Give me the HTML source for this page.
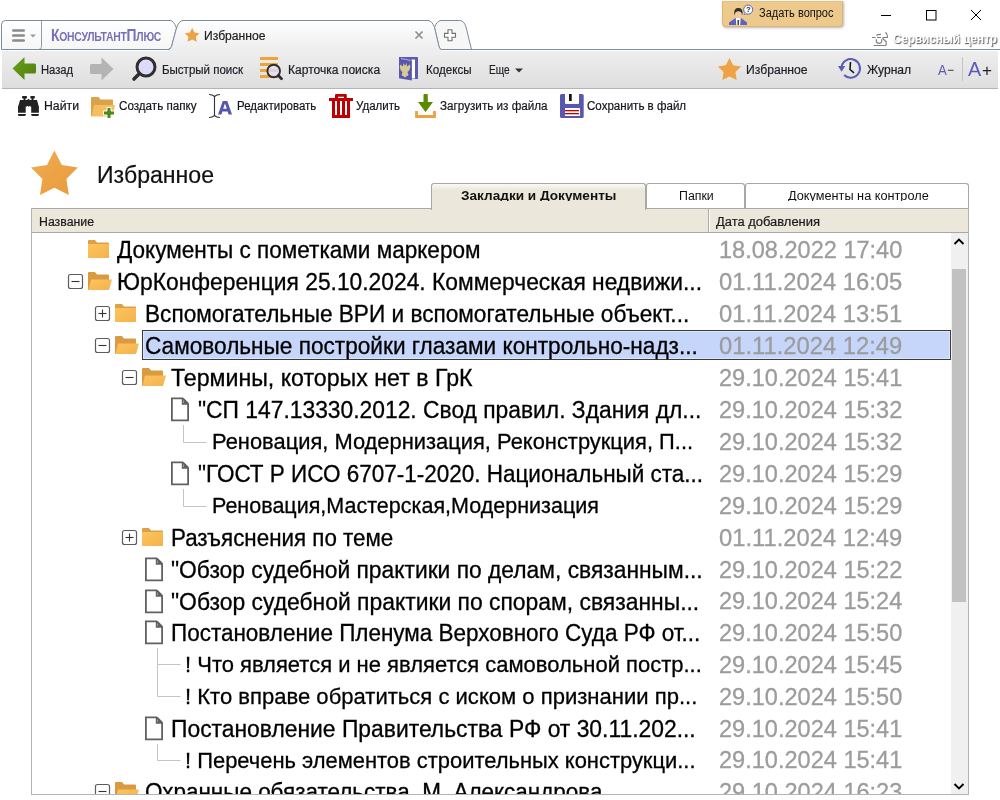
<!DOCTYPE html><html><head><meta charset="utf-8"><style>
html,body{margin:0;padding:0;width:1000px;height:800px;overflow:hidden;background:#fff;position:relative;font-family:"Liberation Sans",sans-serif}
.t,.u{position:absolute;white-space:nowrap;line-height:normal}
.a{position:absolute}
svg{position:absolute;overflow:visible}
</style></head><body>
<svg width="1000" height="52" style="left:0;top:0">
<defs>
<linearGradient id="gAct" x1="0" y1="0" x2="0" y2="1"><stop offset="0" stop-color="#ffffff"/><stop offset="1" stop-color="#ececec"/></linearGradient>
<linearGradient id="gT1" x1="0" y1="0" x2="0" y2="1"><stop offset="0" stop-color="#ffffff"/><stop offset="1" stop-color="#f6f6f6"/></linearGradient>
</defs>
<!-- tab1 -->
<path d="M1.5,49.5 L1.5,24.5 Q1.5,20.5 5.5,20.5 L170.5,20.5 Q173.5,20.5 176.5,28 L171.5,46.5 Q170.5,49.5 168,49.5 Z" fill="url(#gT1)" stroke="#7b8c9c" stroke-width="1"/>
<path d="M41.5,20.5 L41.5,46.5 Q41.5,49.5 38.5,49.5" fill="none" stroke="#7b8c9c" stroke-opacity="0.85" stroke-width="1"/>
<!-- new tab -->
<path d="M441.5,49.5 Q439.8,49.5 439,46.5 L434.5,27.5 Q437,20.5 441,20.5 L459.5,20.5 Q464,20.5 466,27 L471.5,49.5 Z" fill="#f7f7f7" stroke="#7b8c9c" stroke-width="1"/>
<!-- active tab -->
<path d="M168,52 L168,49.5 Q170.5,49.5 171.5,46.5 L176.5,28 Q179,20.5 183,20.5 L428,20.5 Q432,20.5 434.5,27.5 L439,46.5 Q439.8,49.5 441.5,49.5 L441.5,52 Z" fill="url(#gAct)" stroke="none"/>
<path d="M168,49.5 Q170.5,49.5 171.5,46.5 L176.5,28 Q179,20.5 183,20.5 L428,20.5 Q432,20.5 434.5,27.5 L439,46.5 Q439.8,49.5 441.5,49.5 L1000,49.5" fill="none" stroke="#7b8c9c" stroke-width="1"/>
<!-- hamburger -->
<rect x="12" y="29.2" width="13" height="2.6" rx="1.2" fill="#8a8a8a"/>
<rect x="12" y="34.2" width="13" height="2.6" rx="1.2" fill="#8a8a8a"/>
<rect x="12" y="39.2" width="13" height="2.6" rx="1.2" fill="#8a8a8a"/>
<path d="M30,34.5 L36,34.5 L33,37.5 Z" fill="#9a9a9a"/>
<!-- small star -->
<path d="M192.15,27.90 L194.44,32.44 L199.47,33.22 L195.86,36.81 L196.68,41.83 L192.15,39.50 L187.62,41.83 L188.44,36.81 L184.83,33.22 L189.86,32.44 Z" fill="#eea244"/>
<!-- close x -->
<path d="M415.5,31.5 L422.5,38.5 M422.5,31.5 L415.5,38.5" stroke="#8c8c8c" stroke-width="1.6"/>
<!-- plus outline -->
<path d="M448,29.8 L452,29.8 L452,33.4 L455.5,33.4 L455.5,37.2 L452,37.2 L452,40.8 L448,40.8 L448,37.2 L444.5,37.2 L444.5,33.4 L448,33.4 Z" fill="#fff" stroke="#707070" stroke-width="1.1"/>
<!-- window controls -->
<line x1="881" y1="15.5" x2="891" y2="15.5" stroke="#000" stroke-width="1"/>
<rect x="926.5" y="10.5" width="9.5" height="9.5" fill="none" stroke="#000" stroke-width="1"/>
<path d="M971,10 L981,20 M981,10 L971,20" stroke="#000" stroke-width="1"/>
</svg>
<div class="a" style="left:722px;top:1px;width:121px;height:26px;box-sizing:border-box;background:#edc98b;border:1px solid #e2b468;border-top-color:#e8c07c;border-radius:0 0 4px 4px;box-shadow:1px 1px 2.5px rgba(40,50,90,0.35)"></div>
<svg width="24" height="24" style="left:728px;top:3px">
<path d="M1,22 L1,19.5 L7.5,15 L13,15 L19,19.5 L19,22 Z" fill="#5d63c0"/>
<path d="M7.8,15 L12.7,15 L12.2,22 L8.3,22 Z" fill="#fff"/>
<path d="M9.4,17 L11.1,17 L11,22 L9.5,22 Z" fill="#444"/>
<ellipse cx="10.4" cy="10.8" rx="3.1" ry="3.9" fill="#f1c99b"/>
<path d="M6.2,10.8 Q5.8,5 10.4,5 Q15,5 14.6,10.8 L14,12.2 Q14,8.2 10.4,8.2 Q6.8,8.2 6.8,12.2 Z" fill="#2e2e2e"/>
<circle cx="20.2" cy="6.6" r="4.5" fill="#fff" stroke="#5a62c0" stroke-width="1"/>
<path d="M17.2,9.6 L16,11.6 L18.8,10.8" fill="#fff" stroke="#5a62c0" stroke-width="0.7"/>
<text x="20.2" y="9.3" font-size="7.5" font-weight="bold" text-anchor="middle" fill="#222" font-family="Liberation Sans">?</text>
</svg>
<svg width="30" height="22" style="left:866px;top:28px">
<defs><filter id="blr" x="-20%" y="-20%" width="140%" height="140%"><feGaussianBlur stdDeviation="0.35"/></filter></defs>
<g transform="translate(-866,-28)" fill="none" stroke="#555" stroke-width="1.2" filter="url(#blr)" stroke-opacity="0.75">
<path d="M872,37.5 L875.5,37.5 M877,37.5 L881,37.5 M882.5,37.5 L887.5,37.5 Q888,34.5 885.5,32.2"/>
<path d="M876.5,35.5 Q877.5,34.3 881,34.4"/>
<path d="M876.3,39.2 L876.3,41.5 Q876.8,43.4 879,43.4 Q881.3,43.4 881.7,41.3 L881.7,39.2"/>
<path d="M882.5,38.2 L886.2,41.8 L886.2,44.5 Q886.2,45.5 885,45.5 L873.5,45.5"/>
</g></svg>
<div class="a" style="left:2px;top:51px;width:996px;height:37px;background:linear-gradient(#eeeeee,#dedede);border-bottom:1px solid #b4b4b4"></div>
<svg width="1000" height="40" style="left:0;top:50px">
<defs><linearGradient id="gGreen" x1="0" y1="0" x2="1" y2="1"><stop offset="0" stop-color="#6aa01c"/><stop offset="1" stop-color="#4f7f0c"/></linearGradient></defs>
<g transform="translate(0,-50)">
<path d="M12.5,68.5 L24.5,57 L24.5,63.5 L34.5,63.5 Q36,63.5 36,65 L36,72 Q36,73.5 34.5,73.5 L24.5,73.5 L24.5,80 Z" fill="url(#gGreen)"/>
<path d="M113.5,69 L101.5,57.5 L101.5,64 L91.5,64 Q90,64 90,65.5 L90,72.5 Q90,74 91.5,74 L101.5,74 L101.5,80.5 Z" fill="#b4b4b4"/>
<circle cx="146" cy="67" r="9" fill="#dcdcfa" stroke="#2f2f2f" stroke-width="3"/>
<line x1="139" y1="74" x2="134" y2="79" stroke="#2f2f2f" stroke-width="3.6" stroke-linecap="round"/>
<rect x="260" y="57" width="18" height="3" fill="#eea33c"/>
<rect x="260" y="63" width="18" height="3" fill="#eea33c"/>
<rect x="260" y="69" width="18" height="3" fill="#eea33c"/>
<rect x="260" y="75" width="18" height="3" fill="#eea33c"/>
<circle cx="273.7" cy="71" r="6.3" fill="#e2deff" fill-opacity="0.75" stroke="#2e2e2e" stroke-width="1.9"/>
<line x1="278.3" y1="75.6" x2="281.5" y2="78.8" stroke="#2e2e2e" stroke-width="2.8" stroke-linecap="round"/>
<path d="M399,57 L417,57 Q418,57 418,58 L418,79 L413,79 L399,78 Z" fill="#5b5bb5"/>
<path d="M411.5,59.5 L415,59.5 L415,78.5 L411.5,78.5 Z" fill="#fff"/>
<path d="M399,57.5 L411.8,60.8 L411.8,80.6 L399,78.2 Z" fill="#5757b0"/>
<path d="M401,58.6 Q406,59.2 410.5,60.6" fill="none" stroke="#c8c8f0" stroke-width="0.8"/>
<g fill="#d6cb92">
<path d="M403.8,63 L404.6,65.5 L405.4,65.5 L406.2,63 L406.8,64.5 L407.2,66.5 L409.8,64.5 L410.3,67 L409.2,70.5 L407.5,72 L408.5,75 L405,77.5 L401.5,75 L402.5,72 L400.8,70.5 L399.7,67 L400.2,64.5 L402.8,66.5 L403.2,64.5 Z"/>
</g>
<path d="M489,60 L519,60" stroke="none"/>
<path d="M515,68.5 L523,68.5 L519,72.5 Z" fill="#333"/>
<path d="M729.50,58.00 L733.14,65.18 L741.10,66.43 L735.40,72.12 L736.67,80.07 L729.50,76.40 L722.33,80.07 L723.60,72.12 L717.90,66.43 L725.86,65.18 Z" fill="#eea244"/>
<path d="M844.1,75 A9.3,9.3 0 1 0 841.5,66.8" fill="none" stroke="#5a5ab8" stroke-width="2"/>
<path d="M838,66 L845.2,66 L841.6,71.8 Z" fill="#5a5ab8"/>
<path d="M850.5,62 L850,69.5 L854,72.8" fill="none" stroke="#111" stroke-width="1.5"/>
<line x1="962.5" y1="57" x2="962.5" y2="81" stroke="#c4c4c4" stroke-width="1"/>
</g></svg>
<svg width="1000" height="40" style="left:0;top:88px"><g transform="translate(0,-88)">
<!-- binoculars -->
<g fill="#222">
<rect x="22" y="96" width="5" height="2.6" rx="0.8"/><rect x="30.3" y="96" width="4.6" height="2.6" rx="0.8"/>
<rect x="23.5" y="98" width="2" height="2.5"/><rect x="31.5" y="98" width="2" height="2.5"/>
<path d="M20,100 L27,100 L28.5,98.8 L30,100 L37,100 L38.5,105.5 L38.9,106.5 L38.9,112.7 L31.2,112.7 L31.2,106.5 L30,106.5 L29.2,105.8 L28.5,107 L27.8,105.8 L27,106.5 L25.7,106.5 L25.7,112.7 L18,112.7 L18,106.5 L18.5,105.5 Z"/>
<path d="M18,114 L25.8,114 L25.8,115 Q25.5,116 24.5,116 L19.3,116 Q18.3,116 18,115 Z"/>
<path d="M31.2,114 L38.9,114 L38.9,115 Q38.6,116 37.6,116 L32.5,116 Q31.5,116 31.2,115 Z"/>
</g>
<!-- folder plus -->
<g transform="translate(91,97)">
<path d="M0,1 Q0,0 1,0 L7.5,0 L9.5,2.5 L21,2.5 Q22,2.5 22,3.5 L22,10 L0,19.5 Z" fill="#dca14c"/>
<path d="M3,8 L24,8 L21.5,19.5 L0.5,19.5 Z" fill="#f7bf5c"/>
</g>
<path d="M107,107.5 L111,107.5 L111,111 L114.5,111 L114.5,115 L111,115 L111,118.5 L107,118.5 L107,115 L103.5,115 L103.5,111 L107,111 Z" fill="#4a8a1a" stroke="#fff" stroke-width="1"/>
<!-- I-beam + A -->
<path d="M209,94.5 Q212.5,94.5 214.5,96.5 Q216.5,94.5 220,94.5 M214.5,96.5 L214.5,115.5 M209,117.5 Q212.5,117.5 214.5,115.5 Q216.5,117.5 220,117.5" fill="none" stroke="#333" stroke-width="1.1"/>
<path d="M218,114.5 L222.8,101 L227.3,101 L232,114.5 L228.6,114.5 L227.6,111.4 L222.4,111.4 L221.4,114.5 Z M223.2,108.7 L226.8,108.7 L225,103.2 Z" fill="#5555b0" fill-rule="evenodd"/>
<!-- trash -->
<g fill="#c00000">
<path d="M335,98.2 L335,95.3 Q335,94 336.3,94 L345.5,94 Q346.8,94 346.8,95.3 L346.8,98.2 L344,98.2 L344,96.8 L338,96.8 L338,98.2 Z"/>
<rect x="329" y="98" width="24" height="3"/>
<path d="M332,101 L350,101 L350,118 L332,118 Z M335,101 L335,115 L337,115 L337,101 Z M340,101 L340,115 L342,115 L342,101 Z M345,101 L345,115 L347,115 L347,101 Z" fill-rule="evenodd"/>
</g>
<!-- download -->
<path d="M423.5,95 Q423.5,94 424.5,94 L426.8,94 Q427.8,94 427.8,95 L427.8,102 L433,102 L425.5,112 L418,102 L423.5,102 Z" fill="#5a8a00"/>
<path d="M415.1,111 L417.9,111 L417.9,115 L433.1,115 L433.1,111 L435.9,111 L435.9,118 L415.1,118 Z" fill="#eea040"/>
<!-- floppy -->
<path d="M561.5,94 L565,94 L565,103 Q565,104 566,104 L578,104 Q579,104 579,103 L579,94 L582.2,94 Q583.7,94 583.7,95.5 L583.7,116.4 Q583.7,117.9 582.2,117.9 L561.5,117.9 Q560,117.9 560,116.4 L560,95.5 Q560,94 561.5,94 Z M565,108 L565,115.5 Q565,116 565.5,116 L579.5,116 Q580,116 580,115.5 L580,108.5 Q580,108 579.5,108 L565.5,108 Q565,108 565,108.5 Z" fill="#5858b0" fill-rule="evenodd"/>
<rect x="569" y="94" width="2.7" height="7" fill="#111"/>
<rect x="565" y="110" width="14" height="1.3" fill="#c00000"/>
<rect x="565" y="113" width="14" height="1.3" fill="#c00000"/>
</g></svg>
<svg width="50" height="50" style="left:30px;top:149px">
<defs><linearGradient id="gStar" x1="0" y1="0" x2="1" y2="1"><stop offset="0" stop-color="#f0ac50"/><stop offset="1" stop-color="#e89a3c"/></linearGradient></defs>
<path d="M24.40,1.50 L31.81,15.91 L47.80,18.50 L36.38,29.99 L38.86,46.00 L24.40,38.70 L9.94,46.00 L12.42,29.99 L1.00,18.50 L16.99,15.91 Z" fill="url(#gStar)"/>
</svg>
<div class="a" style="left:646px;top:183px;width:99px;height:25px;background:#fff;border:1px solid #a8a8a8;border-bottom:none;border-radius:3px 3px 0 0;box-sizing:border-box"></div>
<div class="a" style="left:745px;top:183px;width:224px;height:25px;background:#fff;border:1px solid #a8a8a8;border-bottom:none;border-radius:3px 3px 0 0;box-sizing:border-box"></div>
<div class="a" style="left:31px;top:208px;width:938px;height:587px;border:1px solid #b4b4b4;box-sizing:border-box;background:#fff"></div>
<div class="a" style="left:32px;top:209px;width:936px;height:23px;background:#ebe7da;border-bottom:1px solid #a8a8a8"></div>
<div class="a" style="left:646px;top:208px;width:323px;height:1px;background:#a8a8a8"></div>
<div class="a" style="left:431px;top:183px;width:215px;height:27px;background:linear-gradient(#fafaf6 0px,#ebe7da 6px);border:1px solid #a8a8a8;border-bottom:none;border-radius:3px 3px 0 0;box-sizing:border-box"></div>
<div class="a" style="left:32px;top:208px;width:399px;height:1px;background:#a8a8a8"></div>
<div class="a" style="left:708px;top:209px;width:1px;height:23px;background:#ababab"></div><div class="a" style="left:709px;top:209px;width:1px;height:23px;background:#fbfaf6"></div>
<div class="a" style="left:431px;top:183px;width:538px;height:18px;overflow:hidden"><div class="u" style="left:30px;top:6.14px;font-size:12px;font-weight:bold;color:#111;transform:scaleX(1.133);transform-origin:0 0">Закладки и Документы</div><div class="u" style="left:248px;top:6.14px;font-size:12px;color:#111;transform:scaleX(1.03);transform-origin:0 0">Папки</div><div class="u" style="left:356.5px;top:6.14px;font-size:12px;color:#111;transform:scaleX(1.06);transform-origin:0 0">Документы на контроле</div></div>
<div class="a" style="left:142px;top:330px;width:809px;height:30px;box-sizing:border-box;background:#c6d6fa;border:1px solid #3c3a36;box-shadow:inset 0 0 0 1px #dbe5fc"></div>
<svg width="1000" height="800" style="left:0;top:0"><defs><linearGradient id="gFold" x1="0" y1="0" x2="1" y2="1"><stop offset="0" stop-color="#fcc45e"/><stop offset="1" stop-color="#f4b24c"/></linearGradient></defs><g transform="translate(88,240.00)"><path d="M0,1 Q0,0 1,0 L7,0 L9,2.5 L20,2.5 Q21,2.5 21,3.5 L21,18 L1,18 Q0,18 0,17 Z" fill="#dda04a"/><path d="M0,4 L21,4 L21,18 L1,18 Q0,18 0,17 Z" fill="url(#gFold)"/></g><rect x="68.5" y="274.5" width="14" height="14" rx="2" fill="#fff" stroke="#5c5c5c" stroke-width="1.2"/><line x1="71.5" y1="281.5" x2="79.5" y2="281.5" stroke="#333" stroke-width="1.1"/><g transform="translate(88,272.00)"><path d="M0,1 Q0,0 1,0 L7,0 L9,2.5 L20,2.5 Q21,2.5 21,3.5 L21,9 L0,18 Z" fill="#d99a42"/><path d="M3,7.5 L24,7.5 L21,18 L0.5,18 Z" fill="url(#gFold)"/></g><rect x="95.5" y="306.5" width="14" height="14" rx="2" fill="#fff" stroke="#5c5c5c" stroke-width="1.2"/><line x1="98.5" y1="313.5" x2="106.5" y2="313.5" stroke="#333" stroke-width="1.1"/><line x1="102.5" y1="309.5" x2="102.5" y2="317.5" stroke="#333" stroke-width="1.1"/><g transform="translate(115,304.00)"><path d="M0,1 Q0,0 1,0 L7,0 L9,2.5 L20,2.5 Q21,2.5 21,3.5 L21,18 L1,18 Q0,18 0,17 Z" fill="#dda04a"/><path d="M0,4 L21,4 L21,18 L1,18 Q0,18 0,17 Z" fill="url(#gFold)"/></g><rect x="95.5" y="338.5" width="14" height="14" rx="2" fill="#fff" stroke="#5c5c5c" stroke-width="1.2"/><line x1="98.5" y1="345.5" x2="106.5" y2="345.5" stroke="#333" stroke-width="1.1"/><g transform="translate(115,336.00)"><path d="M0,1 Q0,0 1,0 L7,0 L9,2.5 L20,2.5 Q21,2.5 21,3.5 L21,9 L0,18 Z" fill="#d99a42"/><path d="M3,7.5 L24,7.5 L21,18 L0.5,18 Z" fill="url(#gFold)"/></g><rect x="122.5" y="370.5" width="14" height="14" rx="2" fill="#fff" stroke="#5c5c5c" stroke-width="1.2"/><line x1="125.5" y1="377.5" x2="133.5" y2="377.5" stroke="#333" stroke-width="1.1"/><g transform="translate(142,368.00)"><path d="M0,1 Q0,0 1,0 L7,0 L9,2.5 L20,2.5 Q21,2.5 21,3.5 L21,9 L0,18 Z" fill="#d99a42"/><path d="M3,7.5 L24,7.5 L21,18 L0.5,18 Z" fill="url(#gFold)"/></g><g transform="translate(171,397.50)"><path d="M0.9,0.9 L11.6,0.9 L17.1,6.4 L17.1,22.9 L0.9,22.9 Z" fill="#fff" stroke="#616161" stroke-width="1.8" stroke-linejoin="miter"/><path d="M11.6,0.9 L11.6,6.4 L17.1,6.4" fill="none" stroke="#616161" stroke-width="1.6"/><path d="M12.6,0.5 L17.6,5.5 L12.6,5.5 Z" fill="#616161"/></g><line x1="183.5" y1="442.5" x2="206.5" y2="442.5" stroke="#c4c4c4" stroke-width="1"/><g transform="translate(171,461.50)"><path d="M0.9,0.9 L11.6,0.9 L17.1,6.4 L17.1,22.9 L0.9,22.9 Z" fill="#fff" stroke="#616161" stroke-width="1.8" stroke-linejoin="miter"/><path d="M11.6,0.9 L11.6,6.4 L17.1,6.4" fill="none" stroke="#616161" stroke-width="1.6"/><path d="M12.6,0.5 L17.6,5.5 L12.6,5.5 Z" fill="#616161"/></g><line x1="183.5" y1="506.5" x2="206.5" y2="506.5" stroke="#c4c4c4" stroke-width="1"/><rect x="122.5" y="530.5" width="14" height="14" rx="2" fill="#fff" stroke="#5c5c5c" stroke-width="1.2"/><line x1="125.5" y1="537.5" x2="133.5" y2="537.5" stroke="#333" stroke-width="1.1"/><line x1="129.5" y1="533.5" x2="129.5" y2="541.5" stroke="#333" stroke-width="1.1"/><g transform="translate(142,528.00)"><path d="M0,1 Q0,0 1,0 L7,0 L9,2.5 L20,2.5 Q21,2.5 21,3.5 L21,18 L1,18 Q0,18 0,17 Z" fill="#dda04a"/><path d="M0,4 L21,4 L21,18 L1,18 Q0,18 0,17 Z" fill="url(#gFold)"/></g><g transform="translate(145,557.50)"><path d="M0.9,0.9 L11.6,0.9 L17.1,6.4 L17.1,22.9 L0.9,22.9 Z" fill="#fff" stroke="#616161" stroke-width="1.8" stroke-linejoin="miter"/><path d="M11.6,0.9 L11.6,6.4 L17.1,6.4" fill="none" stroke="#616161" stroke-width="1.6"/><path d="M12.6,0.5 L17.6,5.5 L12.6,5.5 Z" fill="#616161"/></g><g transform="translate(145,589.50)"><path d="M0.9,0.9 L11.6,0.9 L17.1,6.4 L17.1,22.9 L0.9,22.9 Z" fill="#fff" stroke="#616161" stroke-width="1.8" stroke-linejoin="miter"/><path d="M11.6,0.9 L11.6,6.4 L17.1,6.4" fill="none" stroke="#616161" stroke-width="1.6"/><path d="M12.6,0.5 L17.6,5.5 L12.6,5.5 Z" fill="#616161"/></g><g transform="translate(145,620.50)"><path d="M0.9,0.9 L11.6,0.9 L17.1,6.4 L17.1,22.9 L0.9,22.9 Z" fill="#fff" stroke="#616161" stroke-width="1.8" stroke-linejoin="miter"/><path d="M11.6,0.9 L11.6,6.4 L17.1,6.4" fill="none" stroke="#616161" stroke-width="1.6"/><path d="M12.6,0.5 L17.6,5.5 L12.6,5.5 Z" fill="#616161"/></g><line x1="157.5" y1="664.5" x2="180.5" y2="664.5" stroke="#c4c4c4" stroke-width="1"/><line x1="157.5" y1="696.5" x2="180.5" y2="696.5" stroke="#c4c4c4" stroke-width="1"/><g transform="translate(145,716.50)"><path d="M0.9,0.9 L11.6,0.9 L17.1,6.4 L17.1,22.9 L0.9,22.9 Z" fill="#fff" stroke="#616161" stroke-width="1.8" stroke-linejoin="miter"/><path d="M11.6,0.9 L11.6,6.4 L17.1,6.4" fill="none" stroke="#616161" stroke-width="1.6"/><path d="M12.6,0.5 L17.6,5.5 L12.6,5.5 Z" fill="#616161"/></g><line x1="157.5" y1="760.5" x2="180.5" y2="760.5" stroke="#c4c4c4" stroke-width="1"/><rect x="95.5" y="784.5" width="14" height="14" rx="2" fill="#fff" stroke="#5c5c5c" stroke-width="1.2"/><line x1="98.5" y1="791.5" x2="106.5" y2="791.5" stroke="#333" stroke-width="1.1"/><g transform="translate(115,782.00)"><path d="M0,1 Q0,0 1,0 L7,0 L9,2.5 L20,2.5 Q21,2.5 21,3.5 L21,9 L0,18 Z" fill="#d99a42"/><path d="M3,7.5 L24,7.5 L21,18 L0.5,18 Z" fill="url(#gFold)"/></g><line x1="183.5" y1="425" x2="183.5" y2="442.5" stroke="#c4c4c4" stroke-width="1"/><line x1="183.5" y1="489" x2="183.5" y2="506.5" stroke="#c4c4c4" stroke-width="1"/><line x1="157.5" y1="648" x2="157.5" y2="696.5" stroke="#c4c4c4" stroke-width="1"/><line x1="157.5" y1="744" x2="157.5" y2="760.5" stroke="#c4c4c4" stroke-width="1"/></svg>
<div class="t" id="t0" style="left:50.5px;top:25.60px;font-size:16.8px;color:#7870b6;font-weight:bold;transform:scaleX(0.8261);transform-origin:0 0;letter-spacing:-0.3px;">К<span style="font-size:12.6px">ОНСУЛЬТАНТ</span>П<span style="font-size:12.6px">ЛЮС</span></div>
<div class="t" id="t1" style="left:203.6px;top:28.64px;font-size:12px;color:#222;font-weight:normal;transform:scaleX(1.0110);transform-origin:0 0;-webkit-text-stroke:0.2px currentColor;">Избранное</div>
<div class="t" id="t2" style="left:759px;top:5.94px;font-size:12px;color:#111;font-weight:normal;transform:scaleX(0.9176);transform-origin:0 0;">Задать вопрос</div>
<div class="t" id="t3" style="left:893px;top:30.98px;font-size:13.5px;color:#ffffff;font-weight:bold;transform:scaleX(0.8654);transform-origin:0 0;text-shadow:1px 1px 1.2px rgba(0,0,0,0.7);">Сервисный центр</div>
<div class="t" id="t4" style="left:41.2px;top:62.64px;font-size:12px;color:#1e1e26;font-weight:normal;transform:scaleX(0.9334);transform-origin:0 0;-webkit-text-stroke:0.2px currentColor;">Назад</div>
<div class="t" id="t5" style="left:161.7px;top:62.64px;font-size:12px;color:#1e1e26;font-weight:normal;transform:scaleX(0.9601);transform-origin:0 0;-webkit-text-stroke:0.2px currentColor;">Быстрый поиск</div>
<div class="t" id="t6" style="left:288.4px;top:62.64px;font-size:12px;color:#1e1e26;font-weight:normal;transform:scaleX(1.0045);transform-origin:0 0;-webkit-text-stroke:0.2px currentColor;">Карточка поиска</div>
<div class="t" id="t7" style="left:426.2px;top:62.64px;font-size:12px;color:#1e1e26;font-weight:normal;transform:scaleX(0.9683);transform-origin:0 0;-webkit-text-stroke:0.2px currentColor;">Кодексы</div>
<div class="t" id="t8" style="left:488.7px;top:62.64px;font-size:12px;color:#1e1e26;font-weight:normal;transform:scaleX(0.8435);transform-origin:0 0;-webkit-text-stroke:0.2px currentColor;">Еще</div>
<div class="t" id="t9" style="left:746.2px;top:62.64px;font-size:12px;color:#1e1e26;font-weight:normal;transform:scaleX(1.0127);transform-origin:0 0;-webkit-text-stroke:0.2px currentColor;">Избранное</div>
<div class="t" id="t10" style="left:867.2px;top:62.64px;font-size:12px;color:#1e1e26;font-weight:normal;transform:scaleX(1.0069);transform-origin:0 0;-webkit-text-stroke:0.2px currentColor;">Журнал</div>
<div class="t" id="t11" style="left:938px;top:61.22px;font-size:15px;color:#5a5ab8;font-weight:normal;transform:scaleX(0.8786);transform-origin:0 0;">A</div>
<div class="t" id="t12" style="left:947px;top:62.94px;font-size:12px;color:#222;font-weight:normal;transform:scaleX(0.9978);transform-origin:0 0;">−</div>
<div class="t" id="t13" style="left:967.5px;top:57.25px;font-size:20.5px;color:#5a5ab8;font-weight:normal;transform:scaleX(0.9644);transform-origin:0 0;">A</div>
<div class="t" id="t14" style="left:981.5px;top:61.12px;font-size:17px;color:#222;font-weight:normal;transform:scaleX(1.0063);transform-origin:0 0;">+</div>
<div class="t" id="t15" style="left:44.2px;top:99.14px;font-size:12px;color:#15151c;font-weight:normal;transform:scaleX(1.0219);transform-origin:0 0;-webkit-text-stroke:0.2px currentColor;">Найти</div>
<div class="t" id="t16" style="left:118.9px;top:99.14px;font-size:12px;color:#15151c;font-weight:normal;transform:scaleX(0.9700);transform-origin:0 0;-webkit-text-stroke:0.2px currentColor;">Создать папку</div>
<div class="t" id="t17" style="left:236.9px;top:99.14px;font-size:12px;color:#15151c;font-weight:normal;transform:scaleX(0.9565);transform-origin:0 0;-webkit-text-stroke:0.2px currentColor;">Редактировать</div>
<div class="t" id="t18" style="left:356.2px;top:99.14px;font-size:12px;color:#15151c;font-weight:normal;transform:scaleX(0.9623);transform-origin:0 0;-webkit-text-stroke:0.2px currentColor;">Удалить</div>
<div class="t" id="t19" style="left:440px;top:99.14px;font-size:12px;color:#15151c;font-weight:normal;transform:scaleX(0.9729);transform-origin:0 0;-webkit-text-stroke:0.2px currentColor;">Загрузить из файла</div>
<div class="t" id="t20" style="left:587.2px;top:99.14px;font-size:12px;color:#15151c;font-weight:normal;transform:scaleX(0.9627);transform-origin:0 0;-webkit-text-stroke:0.2px currentColor;">Сохранить в файл</div>
<div class="t" id="t21" style="left:96.7px;top:162.19px;font-size:23px;color:#111;font-weight:normal;transform:scaleX(1.0038);transform-origin:0 0;-webkit-text-stroke:0.2px #111;">Избранное</div>
<div class="t" id="t22" style="left:38.8px;top:215.14px;font-size:12px;color:#1a1a1a;font-weight:normal;transform:scaleX(1.0256);transform-origin:0 0;-webkit-text-stroke:0.2px currentColor;">Название</div>
<div class="t" id="t23" style="left:715.5px;top:215.14px;font-size:12px;color:#1a1a1a;font-weight:normal;transform:scaleX(1.0781);transform-origin:0 0;-webkit-text-stroke:0.2px currentColor;">Дата добавления</div>
<div class="t" id="t24" style="left:117px;top:236.73px;font-size:23.5px;color:#000;font-weight:normal;transform:scaleX(0.9595);transform-origin:0 0;-webkit-text-stroke:0.3px #000;">Документы с пометками маркером</div>
<div class="t" id="t25" style="left:718.5px;top:237.19px;font-size:23px;color:#9c9c9c;font-weight:normal;transform:scaleX(1.0237);transform-origin:0 0;-webkit-text-stroke:0.3px #9c9c9c;">18.08.2022 17:40</div>
<div class="t" id="t26" style="left:117px;top:268.73px;font-size:23.5px;color:#000;font-weight:normal;transform:scaleX(0.9706);transform-origin:0 0;-webkit-text-stroke:0.3px #000;">ЮрКонференция 25.10.2024. Коммерческая недвижи...</div>
<div class="t" id="t27" style="left:718.5px;top:269.19px;font-size:23px;color:#9c9c9c;font-weight:normal;transform:scaleX(1.0335);transform-origin:0 0;-webkit-text-stroke:0.3px #9c9c9c;">01.11.2024 16:05</div>
<div class="t" id="t28" style="left:144.5px;top:300.73px;font-size:23.5px;color:#000;font-weight:normal;transform:scaleX(0.9627);transform-origin:0 0;-webkit-text-stroke:0.3px #000;">Вспомогательные ВРИ и вспомогательные объект...</div>
<div class="t" id="t29" style="left:718.5px;top:301.19px;font-size:23px;color:#9c9c9c;font-weight:normal;transform:scaleX(1.0335);transform-origin:0 0;-webkit-text-stroke:0.3px #9c9c9c;">01.11.2024 13:51</div>
<div class="t" id="t30" style="left:145px;top:332.73px;font-size:23.5px;color:#000;font-weight:normal;transform:scaleX(0.9624);transform-origin:0 0;-webkit-text-stroke:0.3px #000;">Самовольные постройки глазами контрольно-надз...</div>
<div class="t" id="t31" style="left:718.5px;top:333.19px;font-size:23px;color:#9c9c9c;font-weight:normal;transform:scaleX(1.0335);transform-origin:0 0;-webkit-text-stroke:0.3px #9c9c9c;">01.11.2024 12:49</div>
<div class="t" id="t32" style="left:171px;top:364.73px;font-size:23.5px;color:#000;font-weight:normal;transform:scaleX(0.9852);transform-origin:0 0;-webkit-text-stroke:0.3px #000;">Термины, которых нет в ГрК</div>
<div class="t" id="t33" style="left:718.5px;top:365.19px;font-size:23px;color:#9c9c9c;font-weight:normal;transform:scaleX(1.0237);transform-origin:0 0;-webkit-text-stroke:0.3px #9c9c9c;">29.10.2024 15:41</div>
<div class="t" id="t34" style="left:197.6px;top:396.73px;font-size:23.5px;color:#000;font-weight:normal;transform:scaleX(0.9713);transform-origin:0 0;-webkit-text-stroke:0.3px #000;">"СП 147.13330.2012. Свод правил. Здания дл...</div>
<div class="t" id="t35" style="left:718.5px;top:397.19px;font-size:23px;color:#9c9c9c;font-weight:normal;transform:scaleX(1.0237);transform-origin:0 0;-webkit-text-stroke:0.3px #9c9c9c;">29.10.2024 15:32</div>
<div class="t" id="t36" style="left:211.9px;top:428.37px;font-size:22.8px;color:#000;font-weight:normal;transform:scaleX(0.9602);transform-origin:0 0;-webkit-text-stroke:0.3px #000;">Реновация, Модернизация, Реконструкция, П...</div>
<div class="t" id="t37" style="left:718.5px;top:429.19px;font-size:23px;color:#9c9c9c;font-weight:normal;transform:scaleX(1.0237);transform-origin:0 0;-webkit-text-stroke:0.3px #9c9c9c;">29.10.2024 15:32</div>
<div class="t" id="t38" style="left:197.6px;top:460.73px;font-size:23.5px;color:#000;font-weight:normal;transform:scaleX(0.9567);transform-origin:0 0;-webkit-text-stroke:0.3px #000;">"ГОСТ Р ИСО 6707-1-2020. Национальный ста...</div>
<div class="t" id="t39" style="left:718.5px;top:461.19px;font-size:23px;color:#9c9c9c;font-weight:normal;transform:scaleX(1.0237);transform-origin:0 0;-webkit-text-stroke:0.3px #9c9c9c;">29.10.2024 15:29</div>
<div class="t" id="t40" style="left:211.9px;top:492.37px;font-size:22.8px;color:#000;font-weight:normal;transform:scaleX(0.9438);transform-origin:0 0;-webkit-text-stroke:0.3px #000;">Реновация,Мастерская,Модернизация</div>
<div class="t" id="t41" style="left:718.5px;top:493.19px;font-size:23px;color:#9c9c9c;font-weight:normal;transform:scaleX(1.0237);transform-origin:0 0;-webkit-text-stroke:0.3px #9c9c9c;">29.10.2024 15:29</div>
<div class="t" id="t42" style="left:171px;top:524.73px;font-size:23.5px;color:#000;font-weight:normal;transform:scaleX(0.9514);transform-origin:0 0;-webkit-text-stroke:0.3px #000;">Разъяснения по теме</div>
<div class="t" id="t43" style="left:718.5px;top:525.18px;font-size:23px;color:#9c9c9c;font-weight:normal;transform:scaleX(1.0335);transform-origin:0 0;-webkit-text-stroke:0.3px #9c9c9c;">01.11.2024 12:49</div>
<div class="t" id="t44" style="left:171px;top:556.73px;font-size:23.5px;color:#000;font-weight:normal;transform:scaleX(0.9705);transform-origin:0 0;-webkit-text-stroke:0.3px #000;">"Обзор судебной практики по делам, связанным...</div>
<div class="t" id="t45" style="left:718.5px;top:557.18px;font-size:23px;color:#9c9c9c;font-weight:normal;transform:scaleX(1.0237);transform-origin:0 0;-webkit-text-stroke:0.3px #9c9c9c;">29.10.2024 15:22</div>
<div class="t" id="t46" style="left:171px;top:588.73px;font-size:23.5px;color:#000;font-weight:normal;transform:scaleX(0.9735);transform-origin:0 0;-webkit-text-stroke:0.3px #000;">"Обзор судебной практики по спорам, связанны...</div>
<div class="t" id="t47" style="left:718.5px;top:588.18px;font-size:23px;color:#9c9c9c;font-weight:normal;transform:scaleX(1.0237);transform-origin:0 0;-webkit-text-stroke:0.3px #9c9c9c;">29.10.2024 15:24</div>
<div class="t" id="t48" style="left:171px;top:619.73px;font-size:23.5px;color:#000;font-weight:normal;transform:scaleX(0.9566);transform-origin:0 0;-webkit-text-stroke:0.3px #000;">Постановление Пленума Верховного Суда РФ от...</div>
<div class="t" id="t49" style="left:718.5px;top:620.18px;font-size:23px;color:#9c9c9c;font-weight:normal;transform:scaleX(1.0237);transform-origin:0 0;-webkit-text-stroke:0.3px #9c9c9c;">29.10.2024 15:50</div>
<div class="t" id="t50" style="left:184.5px;top:651.37px;font-size:22.8px;color:#000;font-weight:normal;transform:scaleX(0.9646);transform-origin:0 0;-webkit-text-stroke:0.3px #000;">! Что является и не является самовольной постр...</div>
<div class="t" id="t51" style="left:718.5px;top:652.18px;font-size:23px;color:#9c9c9c;font-weight:normal;transform:scaleX(1.0237);transform-origin:0 0;-webkit-text-stroke:0.3px #9c9c9c;">29.10.2024 15:45</div>
<div class="t" id="t52" style="left:184.5px;top:683.37px;font-size:22.8px;color:#000;font-weight:normal;transform:scaleX(0.9672);transform-origin:0 0;-webkit-text-stroke:0.3px #000;">! Кто вправе обратиться с иском о признании пр...</div>
<div class="t" id="t53" style="left:718.5px;top:684.18px;font-size:23px;color:#9c9c9c;font-weight:normal;transform:scaleX(1.0237);transform-origin:0 0;-webkit-text-stroke:0.3px #9c9c9c;">29.10.2024 15:50</div>
<div class="t" id="t54" style="left:171px;top:715.73px;font-size:23.5px;color:#000;font-weight:normal;transform:scaleX(0.9725);transform-origin:0 0;-webkit-text-stroke:0.3px #000;">Постановление Правительства РФ от 30.11.202...</div>
<div class="t" id="t55" style="left:718.5px;top:716.18px;font-size:23px;color:#9c9c9c;font-weight:normal;transform:scaleX(1.0237);transform-origin:0 0;-webkit-text-stroke:0.3px #9c9c9c;">29.10.2024 15:41</div>
<div class="t" id="t56" style="left:184.5px;top:747.37px;font-size:22.8px;color:#000;font-weight:normal;transform:scaleX(0.9616);transform-origin:0 0;-webkit-text-stroke:0.3px #000;">! Перечень элементов строительных конструкци...</div>
<div class="t" id="t57" style="left:718.5px;top:747.18px;font-size:23px;color:#9c9c9c;font-weight:normal;transform:scaleX(1.0237);transform-origin:0 0;-webkit-text-stroke:0.3px #9c9c9c;">29.10.2024 15:41</div>
<div class="t" id="t58" style="left:144.5px;top:778.73px;font-size:23.5px;color:#000;font-weight:normal;transform:scaleX(0.9559);transform-origin:0 0;-webkit-text-stroke:0.3px #000;">Охранные обязательства. М. Александрова</div>
<div class="t" id="t59" style="left:718.5px;top:779.18px;font-size:23px;color:#9c9c9c;font-weight:normal;transform:scaleX(1.0237);transform-origin:0 0;-webkit-text-stroke:0.3px #9c9c9c;">29.10.2024 16:23</div>
<div class="a" style="left:0;top:795px;width:1000px;height:5px;background:#fff"></div>
<div class="a" style="left:31px;top:794px;width:938px;height:1px;background:#b4b4b4"></div>
<div class="a" style="left:951px;top:233px;width:17px;height:561px;background:#f0f0f0"></div>
<div class="a" style="left:952px;top:269px;width:14px;height:333px;background:#c1c1c1"></div>
<svg width="20" height="600" style="left:950px;top:230px">
<path d="M4.5,14 L9,9.5 L13.5,14" fill="none" stroke="#000" stroke-width="1.8"/>
<path d="M4.5,554 L9,558.5 L13.5,554" fill="none" stroke="#000" stroke-width="1.8"/>
</svg>
</body></html>
